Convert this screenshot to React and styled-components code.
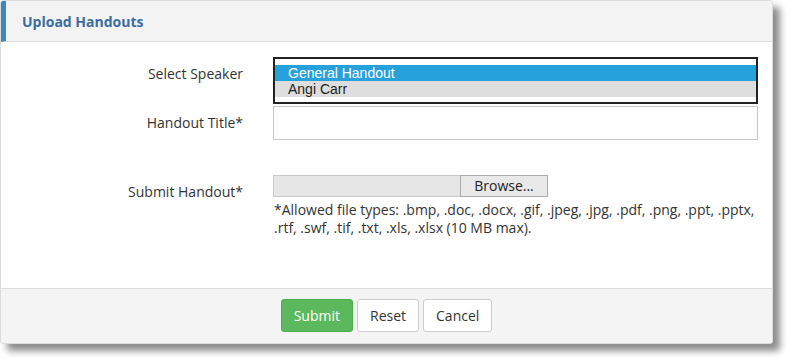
import React from 'react';
import styled, { createGlobalStyle } from 'styled-components';

const GlobalStyle = createGlobalStyle`
  html, body {
    margin: 0;
    padding: 0;
    background: #ffffff;
    font-family: "Open Sans", "Liberation Sans", sans-serif;
    color: #333333;
  }
`;

const Page = styled.div`
  width: 790px;
  height: 361px;
  background: #ffffff;
`;

const Panel = styled.div`
  width: 771px;
  border: 1px solid #dcdcdc;
  border-radius: 3px;
  background: #ffffff;
  box-shadow: 7px 7px 7px rgba(0, 0, 0, 0.45);
  overflow: hidden;
`;

const Header = styled.div`
  height: 40px;
  background: #f3f3f3;
  border-bottom: 1px solid #dddddd;
  border-left: 5px solid #3d86c6;
  display: flex;
  align-items: center;
  padding-left: 16px;
`;

const Title = styled.h3`
  margin: 0;
  font-size: 14px;
  font-weight: 700;
  color: #3b6d9f;
`;

const Body = styled.div`
  padding: 15px 14px 51px 0;
  display: grid;
  grid-template-columns: 242px 1fr;
  column-gap: 30px;
`;

const Label = styled.div`
  text-align: right;
  font-size: 14px;
  line-height: 20px;
  padding-top: 7px;
  margin-top: ${p => p.$top || 0}px;
`;

const Field = styled.div`
  margin-top: ${p => p.$top || 0}px;
`;

const ListBox = styled.div`
  border: 2px solid #222222;
  padding-top: 6px;
  box-sizing: content-box;
  height: 37px;
`;

const Option = styled.div`
  height: 16px;
  line-height: 16px;
  padding-left: 13px;
  font-family: "Liberation Sans", Arial, sans-serif;
  font-size: 14px;
  background: ${p => (p.$selected ? '#27a1dc' : '#dedede')};
  color: ${p => (p.$selected ? '#ffffff' : '#222222')};
`;

const TextInput = styled.input`
  display: block;
  width: 100%;
  height: 34px;
  box-sizing: border-box;
  border: 1px solid #c8c8c8;
  background: #ffffff;
  outline: none;
`;

const FileRow = styled.div`
  display: flex;
  height: 22px;
`;

const FileBox = styled.div`
  width: 187px;
  height: 22px;
  box-sizing: border-box;
  background: #e6e6e6;
  border: 1px solid #c9c9c9;
  border-right: none;
`;

const BrowseButton = styled.div`
  width: 88px;
  height: 22px;
  box-sizing: border-box;
  background: #e9e9e9;
  border: 1px solid #ababab;
  font-size: 14px;
  line-height: 20px;
  text-align: center;
  color: #222222;
`;

const Help = styled.p`
  margin: 4px 0 0 1px;
  font-size: 14px;
  line-height: 18px;
  color: #333333;
  max-width: 484px;
`;

const Footer = styled.div`
  height: 55px;
  background: #f4f4f4;
  border-top: 1px solid #dddddd;
  display: flex;
  justify-content: center;
  align-items: flex-start;
  gap: 4px;
  padding-top: 10px;
  box-sizing: border-box;
`;

const Button = styled.button`
  height: 33px;
  padding: 0 12px;
  font-family: "Open Sans", "Liberation Sans", sans-serif;
  font-size: 14px;
  border-radius: 3px;
  border: 1px solid ${p => (p.$primary ? '#4cae4c' : '#cccccc')};
  background: ${p => (p.$primary ? '#5cb85c' : '#ffffff')};
  color: ${p => (p.$primary ? '#ffffff' : '#333333')};
  cursor: pointer;
`;

const App = () => {
  return (
    <Page>
      <GlobalStyle />
      <Panel>
        <Header>
          <Title>Upload Handouts</Title>
        </Header>
        <Body>
          <Label>Select Speaker</Label>
          <Field>
            <ListBox>
              <Option $selected>General Handout</Option>
              <Option>Angi Carr</Option>
            </ListBox>
          </Field>
          <Label $top={2}>Handout Title*</Label>
          <Field $top={2}>
            <TextInput type="text" />
          </Field>
          <Label $top={35}>Submit Handout*</Label>
          <Field $top={35}>
            <FileRow>
              <FileBox />
              <BrowseButton>Browse...</BrowseButton>
            </FileRow>
            <Help>
              *Allowed file types: .bmp, .doc, .docx, .gif, .jpeg, .jpg, .pdf, .png, .ppt, .pptx, .rtf, .swf, .tif, .txt, .xls, .xlsx (10 MB max).
            </Help>
          </Field>
        </Body>
        <Footer>
          <Button $primary>Submit</Button>
          <Button>Reset</Button>
          <Button>Cancel</Button>
        </Footer>
      </Panel>
    </Page>
  );
};

export default App;
